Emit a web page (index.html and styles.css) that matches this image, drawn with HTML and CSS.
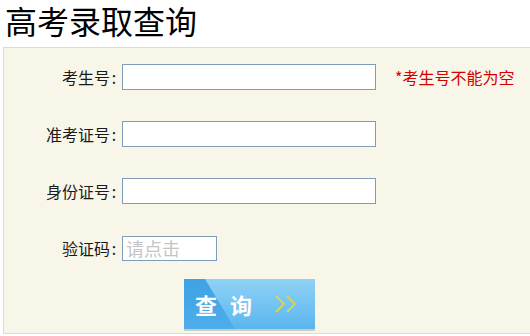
FILE: index.html
```html
<!DOCTYPE html>
<html lang="zh">
<head>
<meta charset="utf-8">
<title>高考录取查询</title>
<link rel="stylesheet" href="styles.css">
</head>
<body>
<h1 class="title">高考录取查询</h1>
<div class="panel">
  <div class="row">
    <label class="lbl">考生号<span class="colon">:</span></label>
    <input class="field" type="text">
    <span class="err">*考生号不能为空</span>
  </div>
  <div class="row">
    <label class="lbl">准考证号<span class="colon">:</span></label>
    <input class="field" type="text">
  </div>
  <div class="row">
    <label class="lbl">身份证号<span class="colon">:</span></label>
    <input class="field" type="text">
  </div>
  <div class="row">
    <label class="lbl">验证码<span class="colon">:</span></label>
    <input class="field captcha" type="text" placeholder="请点击">
  </div>
  <div class="btn-row">
    <button class="btn" type="button">
      <span class="btn-text">查</span><span class="btn-text gap">询</span>
      <svg class="chev" width="24" height="20" viewBox="0 0 24 20"><polyline points="2,2 10,10 2,18" fill="none" stroke="#dcd64a" stroke-width="1.8"/><polyline points="13,2 21,10 13,18" fill="none" stroke="#dcd64a" stroke-width="1.8"/></svg>
    </button>
  </div>
</div>
</body>
</html>
```
FILE: styles.css
```css
html, body {
  margin: 0;
  padding: 0;
  background: #ffffff;
  overflow: hidden;
}
body {
  font-family: "Noto Sans CJK SC", "DejaVu Sans", sans-serif;
  color: #1a1a1a;
  width: 530px;
  height: 336px;
}
.title {
  margin: 0;
  padding-left: 5px;
  height: 47px;
  font-size: 32px;
  line-height: 46px;
  font-weight: normal;
  color: #000;
  font-family: "Liberation Serif", "Noto Sans CJK SC", serif;
}
.panel {
  margin-left: 3px;
  width: 527px;
  height: 287px;
  border: 1px solid #d4dbe3;
  border-right: 0;
  background: #f8f5e9;
  padding-top: 16px;
  box-sizing: border-box;
  display: flex;
  flex-direction: column;
  gap: 31px;
}
.row {
  display: flex;
  align-items: center;
  height: 26px;
}
.lbl {
  width: 114px;
  text-align: right;
  font-size: 16px;
  line-height: 26px;
  color: #1a1a1a;
  margin-right: 4px;
  white-space: nowrap;
}
.colon {
  display: inline-block;
  width: 8px;
  text-align: center;
}
.field {
  width: 254px;
  height: 26px;
  box-sizing: border-box;
  border: 1px solid #7f9db9;
  background: #fff;
  margin: 0;
  padding: 0 2px;
  font-size: 16px;
  font-family: inherit;
}
.captcha {
  width: 95px;
  height: 25px;
  font-size: 18px;
  padding: 0 3px;
}
.captcha::placeholder {
  color: #c4c4c4;
}
.err {
  margin-left: 19px;
  color: #d40000;
  font-size: 16px;
}
.btn-row {
  margin-top: -13px;
  padding-left: 180px;
}
.btn {
  position: relative;
  width: 131px;
  height: 50px;
  border: 0;
  padding: 0 0 0 11px;
  margin: 0;
  display: flex;
  align-items: center;
  background: linear-gradient(#3fa2e4, #4eaceb);
  box-shadow: 0 2px 0 #cbcbc0;
  overflow: hidden;
  cursor: pointer;
}
.btn::before {
  content: "";
  position: absolute;
  inset: 0;
  background: linear-gradient(#8fd2f6, #5ab6ee);
  clip-path: polygon(21px 0, 100% 0, 100% 100%, 51px 100%);
}
.btn-text {
  position: relative;
  color: #fff;
  font-size: 22px;
  font-weight: bold;
  font-family: "Noto Sans CJK SC", serif;
  line-height: 22px;
}
.gap {
  margin-left: 13px;
}
.chev {
  position: relative;
  margin-left: 22px;
}
```
